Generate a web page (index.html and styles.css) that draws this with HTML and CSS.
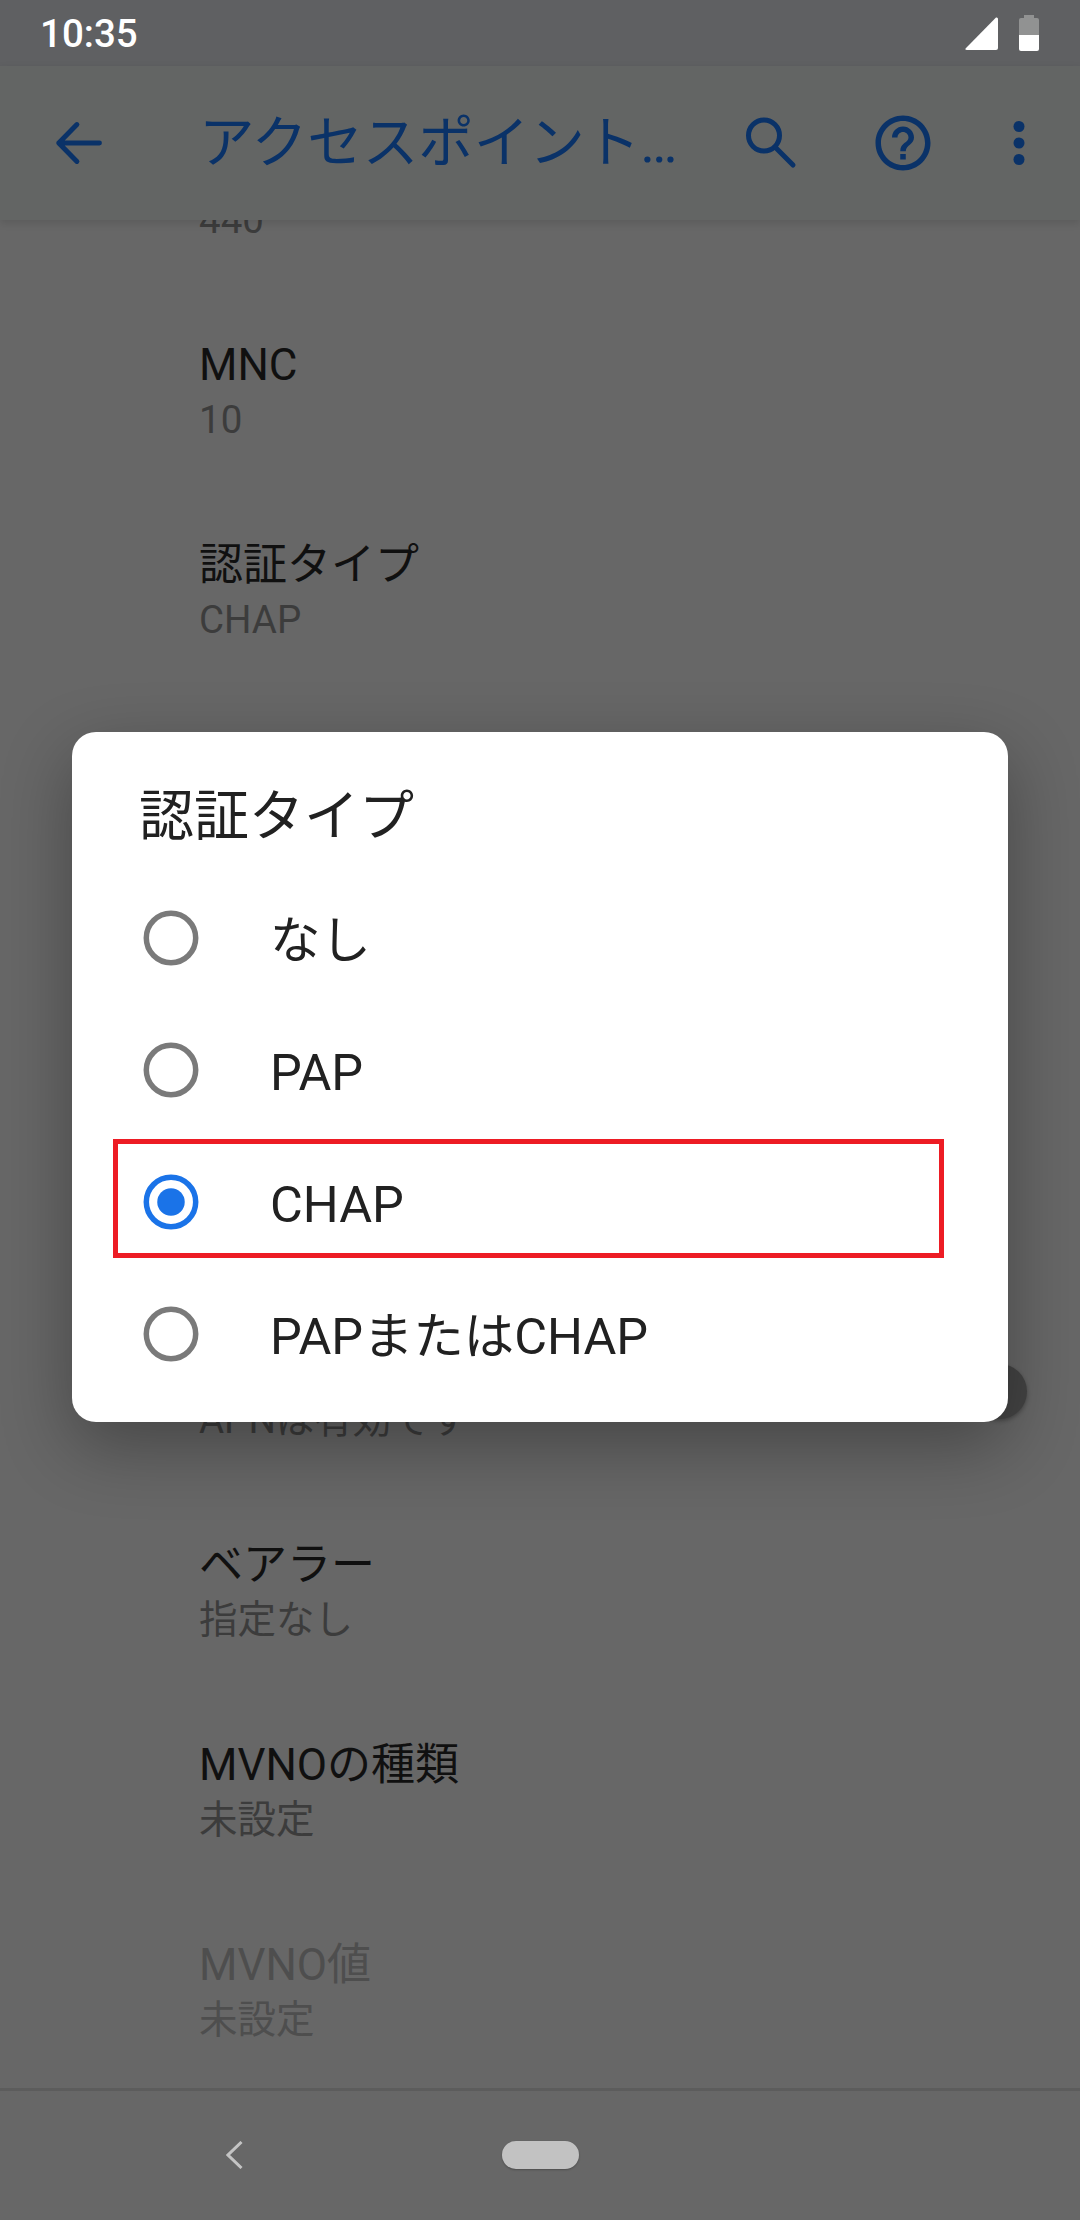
FILE: index.html
```html
<!DOCTYPE html>
<html lang="ja">
<head>
  <meta charset="UTF-8">
  <meta name="viewport" content="width=device-width, initial-scale=1.0">
  <title>認証タイプ</title>
  <link rel="stylesheet" href="styles.css">
</head>
<body>
  <div class="screen">
    <div class="status-bar">
      <span class="status-time">10:35</span>
      <svg class="status-signal" width="33" height="33" viewBox="0 0 33 33"><path d="M31 0.5 Q33 0 33 2 V31 Q33 33 31 33 H2 Q-0.5 33 0.8 31.2 Z" fill="#fff"/></svg>
      <svg class="status-battery" width="20" height="36" viewBox="0 0 20 36">
        <path d="M5 0 H15 V3 H18 Q20 3 20 5 V20 H0 V5 Q0 3 2 3 H5 Z" fill="#919292"/>
        <path d="M0 20 H20 V34 Q20 36 18 36 H2 Q0 36 0 34 Z" fill="#fff"/>
      </svg>
    </div>

    <div class="toolbar">
      <svg class="tb-back" width="66" height="66" viewBox="0 0 24 24" fill="none" stroke="#0a3268" stroke-width="1.8" stroke-linecap="round" stroke-linejoin="round"><path d="M19.8 12H5M11.6 5.3L5 12l6.6 6.7"/></svg>
      <h1 class="tb-title">アクセスポイント…</h1>
      <svg class="tb-icon" width="66" height="66" viewBox="0 0 66 66" fill="none" stroke="#0a3268" stroke-width="5" stroke-linecap="round"><circle cx="26" cy="25.5" r="15.5"/><path d="M37.5 37.5L55 55"/></svg>
      <svg class="tb-icon" width="66" height="66" viewBox="0 0 24 24" fill="#0a3268"><path d="M11 18h2v-2h-2v2zm1-16C6.48 2 2 6.48 2 12s4.48 10 10 10 10-4.48 10-10S17.52 2 12 2zm0 18c-4.41 0-8-3.59-8-8s3.59-8 8-8 8 3.59 8 8-3.59 8-8 8zm0-14c-2.21 0-4 1.79-4 4h2c0-1.1.9-2 2-2s2 .9 2 2c0 2-3 1.75-3 5h2c0-2.25 3-2.5 3-5 0-2.21-1.79-4-4-4z"/></svg>
      <svg class="tb-more" width="66" height="66" viewBox="0 0 66 66" fill="#0a3268"><circle cx="33" cy="16.500" r="5.500"/><circle cx="33" cy="33" r="5.500"/><circle cx="33" cy="49.500" r="5.500"/></svg>
    </div>

    <div class="list">
      <div class="list-inner">
        <div class="row"><div class="row-title"></div><div class="row-sub">440</div></div>
        <div class="row"><div class="row-title">MNC</div><div class="row-sub">10</div></div>
        <div class="row"><div class="row-title">認証タイプ</div><div class="row-sub">CHAP</div></div>
        <div class="row-spacer"></div>
        <div class="row row-switch">
          <div><div class="row-title"></div><div class="row-sub">APNは有効です</div></div>
          <div class="switch-knob"></div>
        </div>
        <div class="row"><div class="row-title">ベアラー</div><div class="row-sub">指定なし</div></div>
        <div class="row"><div class="row-title">MVNOの種類</div><div class="row-sub">未設定</div></div>
        <div class="row row-disabled"><div class="row-title">MVNO値</div><div class="row-sub">未設定</div></div>
      </div>
    </div>

    <div class="nav-bar">
      <svg class="nav-back" width="18" height="28" viewBox="0 0 18 28" fill="none" stroke="#c4c4c4" stroke-width="3"><path d="M15.500 1L2 14l13.500 13" stroke-linejoin="miter"/></svg>
      <div class="nav-home"></div>
    </div>

    <div class="dialog">
      <h2 class="dialog-title">認証タイプ</h2>
      <div class="option">
        <svg class="radio" width="66" height="66" viewBox="0 0 66 66"><circle cx="33" cy="33" r="24.700" fill="none" stroke="#7a7a7a" stroke-width="5.500"/></svg>
        <span class="option-text">なし</span>
      </div>
      <div class="option">
        <svg class="radio" width="66" height="66" viewBox="0 0 66 66"><circle cx="33" cy="33" r="24.700" fill="none" stroke="#7a7a7a" stroke-width="5.500"/></svg>
        <span class="option-text">PAP</span>
      </div>
      <div class="option">
        <svg class="radio" width="66" height="66" viewBox="0 0 66 66"><circle cx="33" cy="33" r="24.700" fill="none" stroke="#1a73e8" stroke-width="5.500"/><circle cx="33" cy="33" r="13.750" fill="#1a73e8"/></svg>
        <span class="option-text">CHAP</span>
      </div>
      <div class="option">
        <svg class="radio" width="66" height="66" viewBox="0 0 66 66"><circle cx="33" cy="33" r="24.700" fill="none" stroke="#7a7a7a" stroke-width="5.500"/></svg>
        <span class="option-text">PAPまたはCHAP</span>
      </div>
      <div class="mark"></div>
    </div>
  </div>
</body>
</html>
```

FILE: styles.css
```css
* {
  box-sizing: border-box;
}

body {
  margin: 0;
  font-family: Roboto, "Noto Sans CJK JP", sans-serif;
  background-color: #676767;
}

.screen {
  position: relative;
  width: 1080px;
  height: 2220px;
  display: flex;
  flex-direction: column;
  overflow: hidden;
}

.status-bar {
  height: 66px;
  flex-shrink: 0;
  display: flex;
  align-items: center;
  padding: 0 41px 0 40px;
  background-color: #5f6062;
  color: #fff;
}

.status-time {
  font-size: 38.5px;
  font-weight: 500;
  margin-right: auto;
}

.status-battery {
  margin-left: 21px;
}

.toolbar {
  position: relative;
  z-index: 1;
  height: 154px;
  flex-shrink: 0;
  display: flex;
  align-items: center;
  padding: 0 28px 0 45px;
  background-color: #636564;
  box-shadow: 0 3px 8px rgba(0, 0, 0, 0.12);
}

.tb-title {
  flex: 1;
  min-width: 0;
  margin: 2px 0 0 88px;
  font-size: 55.5px;
  font-weight: 400;
  line-height: 66px;
  color: #0a3268;
  white-space: nowrap;
}

.tb-icon {
  flex-shrink: 0;
  margin-left: 66px;
}

.tb-more {
  flex-shrink: 0;
  margin-left: 50px;
}

.list {
  flex: 1;
  overflow: hidden;
}

.list-inner {
  margin-top: -129px;
}

.row {
  height: 200px;
  display: flex;
  flex-direction: column;
  justify-content: center;
  padding: 0 53px 0 199px;
}

.row-spacer {
  height: 600px;
}

.row-switch {
  flex-direction: row;
  align-items: center;
  justify-content: space-between;
}

.row-title {
  height: 58px;
  font-size: 44px;
  line-height: 58px;
  color: #101010;
}

.row-sub {
  height: 52px;
  font-size: 38.5px;
  line-height: 52px;
  color: #3c3c3c;
}

.row-disabled .row-title,
.row-disabled .row-sub {
  color: #4e4e4e;
}

.switch-knob {
  width: 55px;
  height: 55px;
  border-radius: 50%;
  background-color: #444;
  box-shadow: 0 2px 4px rgba(0, 0, 0, 0.3);
}

.nav-bar {
  height: 132px;
  flex-shrink: 0;
  display: flex;
  align-items: center;
  padding: 0 0 1px 226px;
  background-color: #676767;
  border-top: 3px solid #5c5c5c;
}

.nav-home {
  width: 77px;
  height: 28px;
  margin-left: 258px;
  border-radius: 14px;
  background-color: #c2c2c2;
  box-shadow: 0 1px 2px rgba(0, 0, 0, 0.25);
}

.dialog {
  position: absolute;
  top: 732px;
  left: 72px;
  width: 936px;
  height: 690px;
  padding: 52px 0 0;
  background-color: #fff;
  border-radius: 24px;
  box-shadow: 0 24px 70px rgba(0, 0, 0, 0.32);
  color: #212121;
}

.dialog-title {
  margin: 0 0 24px;
  padding-left: 67px;
  font-size: 55px;
  font-weight: 400;
  line-height: 64px;
}

.option {
  height: 132px;
  display: flex;
  align-items: center;
  gap: 66px;
  padding-left: 66px;
  font-size: 50.4px;
  line-height: 66px;
}

.option-text {
  margin-top: 6px;
}

.mark {
  position: absolute;
  top: 407px;
  left: 41px;
  width: 831px;
  height: 119px;
  border: 5px solid #ed1c24;
}
```
